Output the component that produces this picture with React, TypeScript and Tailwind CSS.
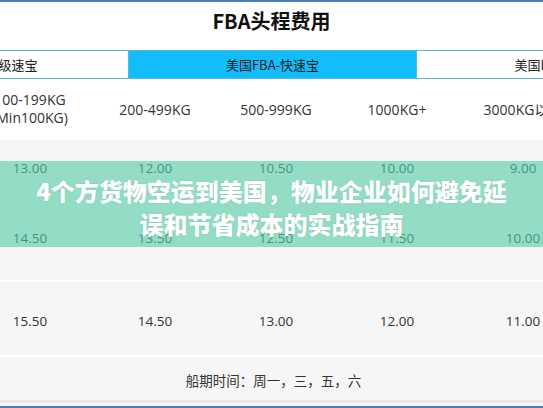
import React from 'react';

const cols = 'grid grid-cols-[122px_128px_114px_128px_124px] -ml-[31px] w-[616px]';

const rows = [
  { h: 'h-[56px]', vals: ['13.00', '12.00', '10.50', '10.00', '9.00'] },
  { h: 'h-[84px]', vals: ['14.50', '13.50', '12.50', '11.50', '10.00'] },
];

export default function App() {
  return (
    <div className="relative w-[543px] h-[408px] overflow-hidden bg-white text-[#333] font-['Open_Sans','Noto_Sans_CJK_SC',sans-serif]">
      {/* top rule */}
      <div className="h-[2px] bg-[#4a7cc6]" />

      <div className="h-[48px] pb-[10px] flex items-center justify-center text-[20px] font-bold text-[#111] font-['Noto_Sans_CJK_SC',sans-serif]">
        FBA头程费用
      </div>

      {/* service tabs */}
      <div className="flex h-[29px] -ml-[159px] w-[864px] border-y border-[#5ab6e0] text-[13px] text-[#222] font-['Noto_Sans_CJK_SC',sans-serif]">
        <div className="w-[288px] flex items-center justify-center border-r border-[#5ab6e0]">美国FBA-超级速宝</div>
        <div className="w-[288px] flex items-center justify-center border-r border-[#5ab6e0] bg-[#12bdfc]">美国FBA-快速宝</div>
        <div className="w-[288px] flex items-center justify-center">美国FBA-经济宝</div>
      </div>

      {/* weight header */}
      <div className={`${cols} h-[61px] items-center text-center text-[14px]`}>
        <div className="leading-[18px] -mt-[1px]">
          100-199KG
          <br />
          (Min100KG)
        </div>
        <div>200-499KG</div>
        <div>500-999KG</div>
        <div>1000KG+</div>
        <div>3000KG以上</div>
      </div>

      <div className="bg-[#f6f6f6] text-[13.5px]">
        {rows.map((r, i) => (
          <div key={i} className={`${cols} ${r.h} items-center text-center`}>
            {r.vals.map((v) => (
              <div key={v}>{v}</div>
            ))}
          </div>
        ))}
        <div className="h-[2px] bg-white" />
        <div className={`${cols} h-[73px] pt-[5px] items-center text-center`}>
          {['15.50', '14.50', '13.00', '12.00', '11.00'].map((v) => (
            <div key={v}>{v}</div>
          ))}
        </div>
        <div className="h-[2px] bg-white" />
        <div className="h-[43px] pt-[3px] flex items-center justify-center text-[13.5px] font-['Noto_Sans_CJK_SC',sans-serif] pl-[4px]">
          船期时间：周一，三，五，六
        </div>
        <div className="h-[3px] bg-[#e9e9e9]" />
        <div className="h-[3px] bg-[#f8f8f8]" />
        <div className="h-[2px] bg-[#4a7cc6]" />
      </div>

      {/* article title overlay */}
      <div className="absolute left-0 top-[161px] w-full h-[86px] bg-[rgba(86,205,168,0.62)] pt-[13px]">
        <div className="mx-auto max-w-[480px] text-center text-[24px] leading-[33px] font-black text-white font-['Noto_Sans_CJK_SC',sans-serif] [text-shadow:0_0_2px_rgba(0,0,0,0.12)]">
          4个方货物空运到美国，物业企业如何避免延误和节省成本的实战指南
        </div>
      </div>
    </div>
  );
}
